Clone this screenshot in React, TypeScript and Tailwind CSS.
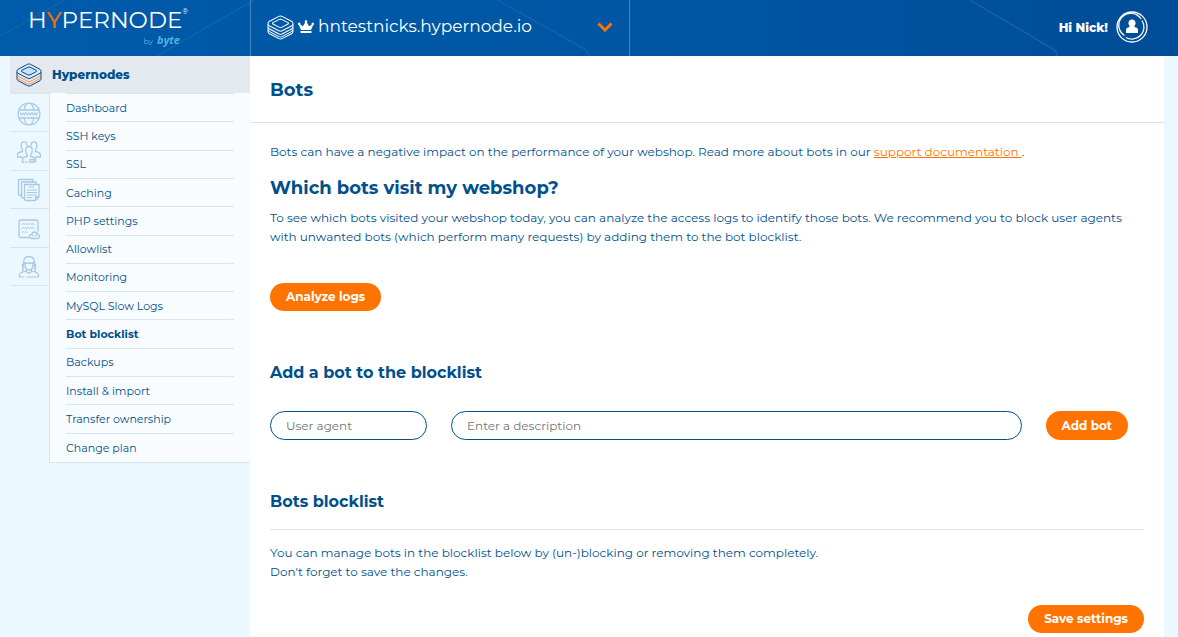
import React from "react";

const menu = [
  "Dashboard",
  "SSH keys",
  "SSL",
  "Caching",
  "PHP settings",
  "Allowlist",
  "Monitoring",
  "MySQL Slow Logs",
  "Bot blocklist",
  "Backups",
  "Install & import",
  "Transfer ownership",
  "Change plan",
];

function StackIcon({ className, fill, layer }: { className: string; fill: string; layer: string }) {
  return (
    <svg viewBox="0 0 26 24" className={className} fill="none" stroke="currentColor" strokeLinejoin="round" aria-hidden="true">
      <path d="M1.3 11.8Q1.6 12.9 2.5 13.5L11.5 18.3Q13 19 14.5 18.3L23.5 13.5Q24.4 12.9 24.7 11.8M1.3 14.3Q1.6 15.4 2.5 16L11.5 20.8Q13 21.5 14.5 20.8L23.5 16Q24.4 15.4 24.7 14.3" stroke={layer} />
      <path d="M11.5 1.3Q13 .5 14.5 1.3L24 6.3Q25 7 25 8.2V15.8Q25 17 24 17.7L14.5 22.7Q13 23.5 11.5 22.7L2 17.7Q1 17 1 15.8V8.2Q1 7 2 6.3Z" />
      <path d="M1 9Q1.3 9.8 2 10.3L11.5 15.2Q13 16 14.5 15.2L24 10.3Q24.7 9.8 25 9" />
      <path d="M12 4.2Q13 3.7 14 4.2L20.3 7.3Q21.2 8 20.3 8.7L14 11.9Q13 12.4 12 11.9L5.7 8.7Q4.8 8 5.7 7.3Z" fill={fill} />
    </svg>
  );
}

const iconProps = {
  viewBox: "0 0 24 24",
  className: "size-6",
  fill: "none",
  stroke: "currentColor",
  strokeLinejoin: "round" as const,
  strokeLinecap: "round" as const,
  "aria-hidden": true,
};

const railIcons = [
  {
    label: "Domains",
    icon: (
      <svg {...iconProps}>
        <path d="M1.8 8A11 11 0 0 1 22.2 8ZM1.8 16A11 11 0 0 0 22.2 16ZM1.8 8Q.5 12 1.8 16M22.2 8Q23.5 12 22.2 16" strokeWidth="1.3" />
        <path d="M7 8Q7.8 3.5 10 1.5M17 8Q16.2 3.5 14 1.5M7 16Q7.8 20.5 10 22.5M17 16Q16.2 20.5 14 22.5" strokeWidth="1.2" />
        <path d="M3.5 10.8L4.5 13L6 11L7.5 13L8.5 10.8M9.5 10.8L10.5 13L12 11L13.5 13L14.5 10.8M15.5 10.8L16.5 13L18 11L19.5 13L20.5 10.8" strokeWidth="1.2" />
      </svg>
    ),
  },
  {
    label: "Teams",
    icon: (
      <svg {...iconProps}>
        <path d="M10 5.5Q9.8 1.8 7.2 1.8Q4 1.8 4.2 5.5Q4.4 8.8 5.5 9.8V11.5Q.8 12.5 .5 14.5V17H5M14 5.5Q14.2 1.8 16.8 1.8Q20 1.8 19.8 5.5Q19.6 8.8 18.5 9.8V11.5Q23.2 12.5 23.5 14.5V17H19" strokeWidth="1.3" />
        <path d="M12 6.5Q15.5 6.5 15.2 10.5Q15 14 13.8 15V16.5Q18.5 17.2 18.5 19V22M12 6.5Q8.5 6.5 8.8 10.5Q9 14 10.2 15V16.5Q5.5 17.2 5.5 19V22H7M9 22H10M12.5 22H17V19.5H13V22" strokeWidth="1.3" />
      </svg>
    ),
  },
  {
    label: "Invoices",
    icon: (
      <svg {...iconProps}>
        <path d="M4.5 17.5H3Q1.5 17.5 1.5 16V1.5H16V3.5M7.5 20H6Q4.5 20 4.5 18.5V4H19V6" strokeWidth="1.3" />
        <path d="M7.5 6.5H22V19L18.5 22.5H9Q7.5 22.5 7.5 21ZM22 19H18.5V22.5" strokeWidth="1.3" />
        <path d="M12 9H17M10 12H19.5M10 14.5H19.5M10 17H19.5M10 19.5H15" />
      </svg>
    ),
  },
  {
    label: "Requests",
    icon: (
      <svg {...iconProps}>
        <path d="M12 20.5H4Q2 20.5 2 18.5V5Q2 3 4 3H19Q21 3 21 5V14" strokeWidth="1.3" />
        <path d="M5 7.5L6.2 6.5L7.5 7.5L8.7 6.5L10 7.5L11.2 6.5L12.5 7.5L13.7 6.5L15 7.5L16.2 6.5L17.5 7.5M5 11.5L6.2 10.5L7.5 11.5L8.7 10.5L10 11.5L11.2 10.5L12.5 11.5L13.7 10.5L15 11.5L16.2 10.5L17.5 11.5M5 15.5L6.2 14.5L7.5 15.5L8.7 14.5L10 15.5" />
        <path d="M14.5 21.5Q12.5 21.3 12.5 19.3Q12.7 17.5 14.5 17.5Q15.3 15 17.5 15Q20 15 20.6 17.3Q22.5 17.5 22.5 19.5Q22.3 21.5 20.5 21.5ZM16 18V19M19 18V19" strokeWidth="1.3" />
      </svg>
    ),
  },
  {
    label: "Support",
    icon: (
      <svg {...iconProps}>
        <path d="M6.5 11V7Q7 1.5 12 1.5T17.5 7V11M6.5 7.5Q12 9 17.5 7.5M8 8.5Q8 15 12 15T16 8.5" strokeWidth="1.3" />
        <path d="M6.5 9.5H5.5V13H7M17.5 9.5H18.5V13H17M6.5 13L5.5 16M17.5 13L18.5 16M9.5 14V16.5L12 18.5L14.5 16.5V14M9.5 16Q2.5 17.5 2.5 19.5V22H7M14.5 16Q21.5 17.5 21.5 19.5V22H10" strokeWidth="1.2" />
      </svg>
    ),
  },
];

function PillButton({ children, type = "button" }: { children: React.ReactNode; type?: "button" | "submit" }) {
  return (
    <button type={type} className="min-h-7 shrink-0 rounded-full bg-[#ff7300] px-4 text-xs leading-5 font-bold whitespace-nowrap text-white">
      {children}
    </button>
  );
}

export default function App() {
  return (
    <div className="flex min-h-screen flex-col bg-[#ecf8ff] font-['Montserrat','Inter',sans-serif] text-[#00508c]">
      <header className="relative flex h-14 bg-linear-to-r from-[#005baa] via-[#0056a3] to-[#004d97] text-white">
        <svg className="pointer-events-none absolute inset-0 h-full w-full" fill="none" stroke="#1062aa" strokeWidth="1.5" aria-hidden="true">
          <path d="M0 36L65 0M157 56L254 0M497 0L583 48Q588 51 589 56M970 0L1053 49Q1057 51 1057 56" />
        </svg>
        <a href="#home" aria-label="Hypernode by byte" className="relative flex w-[250px] shrink-0 flex-col pt-2 pl-7">
          <span className="flex items-start text-[23px] leading-6">
            <span>H<span className="font-medium text-[#f26a0a]">Y</span>PERNODE</span>
            <span className="text-[7px] leading-2">®</span>
          </span>
          <span className="flex w-[152px] items-baseline justify-end gap-1 text-[#50b4e0]">
            <span className="text-[8px] leading-4">by</span>
            <span className="font-['Open_Sans',sans-serif] text-[11px] leading-4 font-bold italic">byte</span>
          </span>
        </a>
        <button type="button" className="relative flex w-[380px] items-center border-x border-[#4586bf] pr-4 pb-1 pl-4 text-left">
          <StackIcon className="mt-0.5 h-[25px] w-[27px] shrink-0" fill="none" layer="currentColor" />
          <svg viewBox="0 0 16 14" className="mt-0.5 ml-1 h-3.5 w-4" fill="currentColor" aria-hidden="true">
            <path d="M3 10L.8 5A1.2 1.2 0 1 1 2.2 4.5L5 6.2L7.2 2.3A1.2 1.2 0 1 1 8.8 2.3L11 6.2L13.8 4.5A1.2 1.2 0 1 1 15.2 5L13 10ZM2.5 11H13.5V13H2.5Z" />
          </svg>
          <span className="ml-1 text-[17px] leading-6">hntestnicks.hypernode.io</span>
          <svg viewBox="0 0 16 10" className="mt-0.5 ml-auto h-2.5 w-4" fill="none" stroke="#ff7300" strokeWidth="3" aria-hidden="true">
            <path d="M1.5 1.5L8 8L14.5 1.5" />
          </svg>
        </button>
        <button type="button" className="relative ml-auto flex items-center gap-2 pr-[30px] pb-0.5 text-xs leading-5 font-extrabold">
          <span className="pt-0.5">Hi Nick!</span>
          <svg viewBox="0 0 32 32" className="size-8" fill="none" stroke="currentColor" aria-hidden="true">
            <circle cx="16" cy="16" r="15" strokeWidth="1.3" />
            <path d="M8.5 24.5A12 12 0 1 1 25 8M26 9.5A12 12 0 0 1 10 26.5" strokeWidth="1.3" />
            <path d="M16 8.5A3.2 3.5 0 0 1 18.6 14.5L18.5 16Q22 16.5 22 19V22H10V19Q10 16.5 13.5 16L13.4 14.5A3.2 3.5 0 0 1 16 8.5Z" fill="currentColor" stroke="none" />
          </svg>
        </button>
      </header>

      <div className="flex grow">
        <aside className="w-[250px] shrink-0 pl-2.5">
          <a href="#hypernodes" className="flex h-[37px] items-center gap-2.5 bg-[#e4e8ef] pl-1.5 text-xs leading-5 font-extrabold">
            <StackIcon className="h-6 w-[26px]" fill="#c5e4fb" layer="#f59a55" />
            Hypernodes
          </a>
          <div className="flex items-start">
            <nav aria-label="Sections" className="grid min-h-[193px] w-[39px] shrink-0 auto-rows-fr border-t border-[#d5e5f1]">
              {railIcons.map((item) => (
                <a key={item.label} href="#section" aria-label={item.label} className="flex items-center justify-center border-b border-[#d5e5f1] pt-0.5 pr-0.5 text-[#a9c9e3]">
                  {item.icon}
                </a>
              ))}
            </nav>
            <nav aria-label="Hypernodes" className="grow border-b border-l border-[#d5e5f1] bg-[#f9fcff] px-4">
              <ul className="grid min-h-[369px] auto-rows-fr border-t border-[#d5e5f1]">
                {menu.map((label) => (
                  <li key={label} className="flex items-center border-b border-[#d5e5f1] last:border-b-0">
                    <a href="#menu" className={label === "Bot blocklist" ? "text-[11px] leading-4 font-bold" : "text-[11px] leading-4"}>
                      {label}
                    </a>
                  </li>
                ))}
              </ul>
            </nav>
          </div>
        </aside>

        <main className="mr-3.5 min-w-0 grow bg-white text-xs leading-[19px]">
          <div className="border-b border-[#d5e5f1] px-5 pt-[21px] pb-[19px]">
            <h1 className="text-lg leading-[26px] font-bold">Bots</h1>
          </div>
          <div className="px-5 pt-[19px]">
            <p>
              Bots can have a negative impact on the performance of your webshop. Read more about bots in our{" "}
              <a href="#docs" className="text-[#ff7300] underline">support documentation </a>.
            </p>
            <h2 className="mt-[13px] text-lg leading-7 font-bold">Which bots visit my webshop?</h2>
            <p className="mt-1.5">
              To see which bots visited your webshop today, you can analyze the access logs to identify those bots. We recommend you to block user agents with unwanted bots (which perform many requests) by adding them to the bot blocklist.
            </p>
            <div className="mt-[37px] flex">
              <PillButton>Analyze logs</PillButton>
            </div>

            <h3 className="mt-[50px] text-base leading-6 font-bold">Add a bot to the blocklist</h3>
            <form className="mt-[26px] flex items-stretch gap-6 pr-4" onSubmit={(e) => e.preventDefault()}>
              <input aria-label="User agent" placeholder="User agent" className="h-[29px] w-[157px] rounded-full border border-[#00508c] bg-white px-[15px] outline-none placeholder:text-[#757575]" />
              <input aria-label="Description" placeholder="Enter a description" className="h-[29px] min-w-0 grow rounded-full border border-[#00508c] bg-white px-[15px] outline-none placeholder:text-[#757575]" />
              <PillButton type="submit">Add bot</PillButton>
            </form>

            <h3 className="mt-[50px] border-b border-[#e0e3e6] pb-[15px] text-base leading-6 font-bold">Bots blocklist</h3>
            <p className="mt-[13px]">
              You can manage bots in the blocklist below by (un-)blocking or removing them completely.
              <br />
              Don't forget to save the changes.
            </p>
            <div className="mt-6 flex justify-end">
              <PillButton>Save settings</PillButton>
            </div>
          </div>
        </main>
      </div>
    </div>
  );
}
